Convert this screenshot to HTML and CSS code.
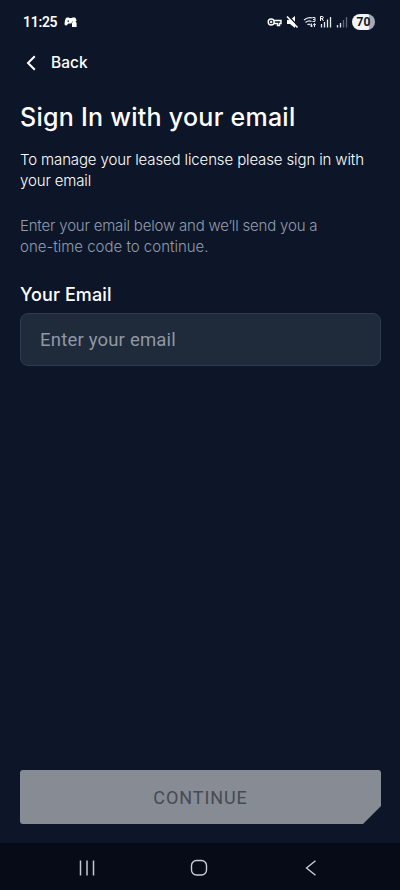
FILE: index.html
```html
<!DOCTYPE html>
<html lang="en">
<head>
<meta charset="utf-8">
<title>Sign In</title>
<link rel="stylesheet" href="styles.css">
</head>
<body>
<div class="screen">
  <div class="status">
    <span class="time">11:25</span>
    <svg class="game" width="14" height="12" viewBox="0 0 14 12"><path fill="#fff" fill-rule="evenodd" d="M3 1.500h1.500l1 .6h2l1-.6H10.500c1.200 0 1.800 1.500 2 3.500H11C9 5 7.500 5.500 7.500 7.500H4.500L2.500 9.500C.8 10 .3 8.500.7 6.500 1 4.500 1.500 1.500 3 1.500zM3.500 4.500v1.300h1.500V4.500z"/><path fill="#fff" d="M8.300 7V6.500a2 1.800 0 0 1 4 0V7h.3V11H8V7z"/></svg>
    <svg class="icons" width="84" height="16" viewBox="0 0 84 16">
      <g fill="none" stroke="#fff" stroke-width="1.400">
        <circle cx="4.200" cy="8" r="3"/><circle cx="4.200" cy="8" r=".5"/>
        <path d="M7 6.500h7v3h-1.500v2h-2v-2H7"/>
      </g>
      <path fill="#fff" d="M20 6h3l5-4v12l-5-4h-3z"/>
      <path d="M21.500 2l9.500 10" stroke="#0e1628" stroke-width="1.500"/><path d="M20 2.500l10.500 11" stroke="#fff" stroke-width="1.600"/>
      <g fill="none" stroke="#e8ebf0" stroke-width="1.200"><path d="M37 6q4-3.500 8.500-2M38.500 8.500q3-2.500 6-1M40.500 10.800q1.500-1.200 3 0"/><path stroke-width="1" d="M45.500 3.500H48v4h-2.500M46 5.500h2M44.500 13V9.500m-1.200 2L44.500 13l1.200-1.500M47.500 13V9.500m-1.200 1.500 1.200-1.500 1.200 1.500"/></g>
      <path fill="none" stroke="#fff" d="M53.500 7V2.500h1.700a1 1 0 0 1 0 2.200h-1.700m1.500 0 1.500 2.300"/>
      <path stroke="#e8ebf0" stroke-width="1.300" d="M54.500 10v3.500M57.500 8v5.500M60.500 5.500v8M63.500 3v10.500"/>
      <path stroke="#e8ebf0" stroke-width="1.300" d="M70.500 11v2.500M73.500 9v4.500"/><path stroke="#606778" stroke-width="1.300" d="M76.500 6v7.500M79.500 3v10.500"/>
    </svg>
    <span class="battery">70</span>
  </div>
  <header class="back"><svg width="12" height="16" viewBox="0 0 12 16"><path d="M9.800 1.200 3 8l6.800 6.800" fill="none" stroke="#fff" stroke-width="2"/></svg><span>Back</span></header>
  <main>
    <h1><span>Sign In with your email</span></h1>
    <p class="lead">To manage your leased license please sign in with<br>your email</p>
    <p class="hint"><span class="tight">Enter your email below and we’ll send you a</span><br><span>one-time code to continue.</span></p>
    <label><span>Your Email</span></label>
    <div class="field"><span>Enter your email</span></div>
    <div class="button"><span>CONTINUE</span></div>
  </main>
  <nav>
    <svg width="16" height="16" viewBox="0 0 16 16"><path d="M1.500.500v15M8 .5v15M14.500.500v15" stroke="#c4c8d0" stroke-width="1.500"/></svg>
    <svg width="18" height="18" viewBox="0 0 18 18"><rect x="1.500" y="1.500" width="15" height="14.500" rx="5" fill="none" stroke="#c9ccd3" stroke-width="1.400"/></svg>
    <svg width="12" height="16" viewBox="0 0 12 16"><path d="M10.500 .8 1.500 8l9 7.200" fill="none" stroke="#c9ccd3" stroke-width="1.400"/></svg>
  </nav>
</div>
</body>
</html>
```
FILE: styles.css
```css
* { box-sizing: border-box; }
body { margin: 0; background: #0d1628; color: #fff; font-family: Inter, "Liberation Sans", sans-serif; }
.screen { height: 890px; display: flex; flex-direction: column; }
span { white-space: nowrap; }
svg { display: block; flex: none; }
.status { height: 44px; display: flex; align-items: center; padding-left: 23px; }
.time { font-family: Roboto, sans-serif; font-size: 14px; font-weight: 600; letter-spacing: -.3px; width: 41px; }
.icons { margin-left: 189px; }
.battery { width: 23px; height: 16px; margin-left: 1px; border-radius: 8px; background: linear-gradient(90deg, #f2f4f7 74%, #a4a9b5 74%); color: #0e1628; font: 700 12px/16px Roboto, sans-serif; text-align: center; }
.back { height: 37px; display: flex; align-items: center; padding-left: 25px; gap: 14px; font-size: 15.500px; font-weight: 500; }
main { flex: 1; display: flex; flex-direction: column; padding: 0 19px 19px 20px; }
h1 { margin: 19px 0 0; font-size: 25px; font-weight: 500; line-height: 34px; letter-spacing: .26px; }
p { margin: 0; font-size: 15px; line-height: 21px; }
.lead { margin-top: 15px; font-weight: 350; letter-spacing: -.13px; white-space: nowrap; }
.hint { margin-top: 24px; color: #929cae; font-weight: 300; }
.tight { letter-spacing: -.19px; }
label { margin-top: 25px; font-size: 18px; line-height: 26px; font-weight: 500; letter-spacing: .1px; }
.field { height: 53px; margin-top: 5px; border: 1px solid #303b4d; border-radius: 8px; background: #1f2a3a; color: #9098a4; font-family: Roboto, sans-serif; font-size: 18.500px; letter-spacing: .2px; line-height: 53px; padding-left: 19px; }
.button { margin-top: auto; height: 54px; border-radius: 3px; background: #878b94; color: #454a53; font: 400 18px/55px Roboto, sans-serif; letter-spacing: .9px; text-align: center; clip-path: polygon(0 0, 100% 0, 100% 36px, calc(100% - 18px) 100%, 0 100%); }
nav { height: 47px; background: #060b17; display: flex; align-items: center; padding: 2px 0 0 79px; }
nav svg:nth-child(2) { margin-left: 95px; }
nav svg:nth-child(3) { margin-left: 97px; }
```
